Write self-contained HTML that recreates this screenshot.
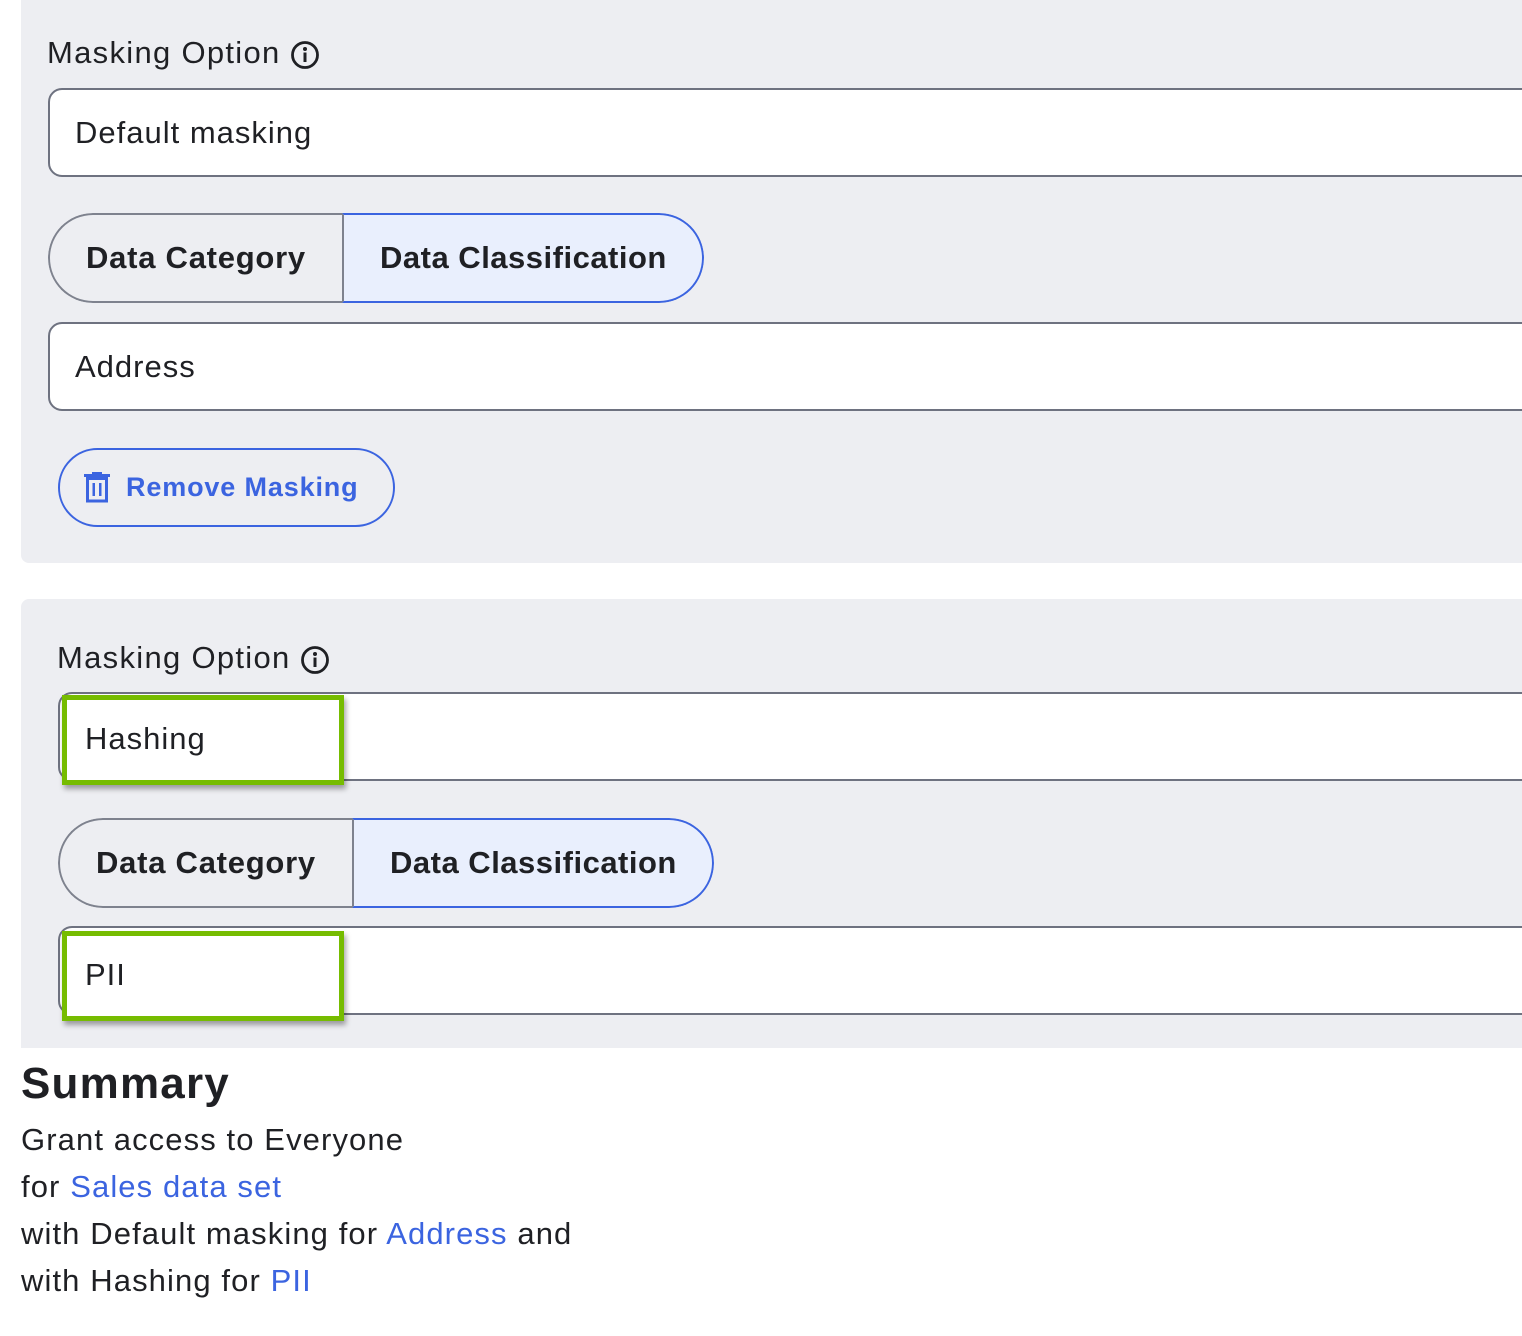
<!DOCTYPE html>
<html><head><meta charset="utf-8"><style>
*{box-sizing:border-box;margin:0;padding:0}
body{width:1522px;height:1336px;background:#fff;position:relative;overflow:hidden;font-family:"Liberation Sans",Arial,sans-serif;color:#1f2024}
.abs{position:absolute}
.panel{position:absolute;left:21px;width:1530px;background:#edeef2;border-radius:8px}
.label{position:absolute;font-size:31px;color:#1f2024;white-space:nowrap;letter-spacing:1.3px}
.inp{position:absolute;height:89px;width:1520px;background:#fff;border:2px solid #6e7280;border-radius:14px;font-size:31px;padding-left:25px;line-height:85px;letter-spacing:1px}
.seg{position:absolute;height:90px;width:656px;border-radius:45px;overflow:hidden;display:flex}
.seg .a{width:294px;border:2px solid #7e828e;border-right:none;border-radius:45px 0 0 45px;font-weight:bold;font-size:31px;line-height:86px;padding-left:36px;background:#edeef2;letter-spacing:.75px;white-space:nowrap}
.seg .b{flex:1;border:2px solid #3b64e0;border-left:2px solid #7e828e;border-radius:0 45px 45px 0;background:#e9effd;font-weight:bold;font-size:31px;line-height:86px;padding-left:36px;letter-spacing:.5px;white-space:nowrap}
.green{position:absolute;width:282px;height:90px;border:5px solid #76bc00;background:#fff;box-shadow:2px 4px 5px rgba(0,0,0,.35);font-size:31px;line-height:78px;padding-left:18px;letter-spacing:1px}
.sum{position:absolute;left:21px;font-size:31px;white-space:nowrap;color:#1f2024;letter-spacing:1.1px}
.lnk{color:#3b64e0}
</style></head><body>
<div class="panel" style="top:-20px;height:583px"></div>
<div class="label" style="left:47px;top:35px">Masking Option</div>
<svg class="abs" style="left:290px;top:40px" width="30" height="30" viewBox="0 0 30 30"><circle cx="15" cy="15" r="12.5" fill="none" stroke="#1f2024" stroke-width="2.8"/><circle cx="15" cy="9" r="2" fill="#1f2024"/><rect x="13.5" y="12.5" width="3" height="9.5" fill="#1f2024"/></svg>
<div class="inp" style="left:48px;top:88px">Default masking</div>
<div class="seg" style="left:48px;top:213px"><div class="a">Data Category</div><div class="b">Data Classification</div></div>
<div class="inp" style="left:48px;top:322px">Address</div>
<div class="abs" style="left:58px;top:448px;width:337px;height:79px;border:2px solid #3b64e0;border-radius:40px;color:#3b64e0;font-weight:bold;font-size:27px;line-height:75px;padding-left:66px;letter-spacing:.85px;white-space:nowrap">Remove Masking</div>
<svg class="abs" style="left:83px;top:471px" width="28" height="32" viewBox="0 0 28 32"><rect x="9" y="1" width="10" height="3" fill="#3b64e0"/><rect x="1" y="3" width="26" height="3" fill="#3b64e0"/><rect x="4.5" y="7.5" width="19" height="22.5" fill="none" stroke="#3b64e0" stroke-width="3"/><rect x="9.5" y="12" width="2.5" height="13" fill="#3b64e0"/><rect x="16" y="12" width="2.5" height="13" fill="#3b64e0"/></svg>

<div class="panel" style="top:599px;height:449px;border-radius:8px 0 0 0"></div>
<div class="label" style="left:57px;top:640px">Masking Option</div>
<svg class="abs" style="left:300px;top:645px" width="30" height="30" viewBox="0 0 30 30"><circle cx="15" cy="15" r="12.5" fill="none" stroke="#1f2024" stroke-width="2.8"/><circle cx="15" cy="9" r="2" fill="#1f2024"/><rect x="13.5" y="12.5" width="3" height="9.5" fill="#1f2024"/></svg>
<div class="inp" style="left:58px;top:692px"></div>
<div class="green" style="left:62px;top:695px">Hashing</div>
<div class="seg" style="left:58px;top:818px"><div class="a">Data Category</div><div class="b">Data Classification</div></div>
<div class="inp" style="left:58px;top:926px"></div>
<div class="green" style="left:62px;top:931px">PII</div>

<div class="sum" style="top:1059px;font-size:44px;font-weight:bold;letter-spacing:1.2px">Summary</div>
<div class="sum" style="top:1122px">Grant access to Everyone</div>
<div class="sum" style="top:1169px">for <span class="lnk">Sales data set</span></div>
<div class="sum" style="top:1216px">with Default masking for <span class="lnk">Address</span> and</div>
<div class="sum" style="top:1263px">with Hashing for <span class="lnk">PII</span></div>
</body></html>
